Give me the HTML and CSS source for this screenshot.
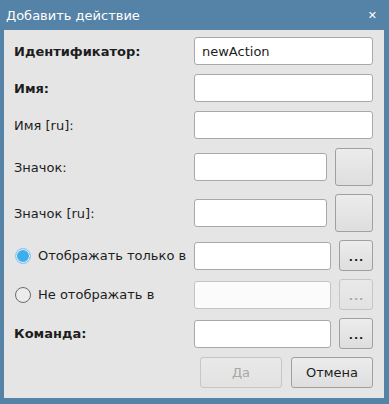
FILE: index.html
```html
<!DOCTYPE html>
<html lang="ru">
<head>
    <meta charset="UTF-8">
    <title>Добавить действие</title>
    <link rel="stylesheet" href="styles.css">
</head>
<body>
<div class="window">
    <div class="titlebar">
        <span class="title">Добавить действие</span>
        <span class="close">&#x2715;</span>
    </div>
    <div class="content">
        <div class="row">
            <label class="lbl bold">Идентификатор:</label>
            <input class="field" type="text" value="newAction">
        </div>
        <div class="row">
            <label class="lbl bold">Имя:</label>
            <input class="field" type="text">
        </div>
        <div class="row">
            <label class="lbl">Имя [ru]:</label>
            <input class="field" type="text">
        </div>
        <div class="row tall">
            <label class="lbl">Значок:</label>
            <input class="field icon-field" type="text">
            <button class="btn icon-btn"></button>
        </div>
        <div class="row tall">
            <label class="lbl">Значок [ru]:</label>
            <input class="field icon-field" type="text">
            <button class="btn icon-btn"></button>
        </div>
        <div class="row mid">
            <label class="lbl radio-lbl"><span class="radio checked"></span>Отображать только в</label>
            <input class="field dots-field" type="text">
            <button class="btn dots">...</button>
        </div>
        <div class="row mid">
            <label class="lbl radio-lbl"><span class="radio"></span>Не отображать в</label>
            <input class="field dots-field" type="text" disabled>
            <button class="btn dots" disabled>...</button>
        </div>
        <div class="row mid">
            <label class="lbl bold">Команда:</label>
            <input class="field dots-field" type="text">
            <button class="btn dots">...</button>
        </div>
        <div class="row mid actions">
            <button class="btn action" disabled>Да</button>
            <button class="btn action">Отмена</button>
        </div>
    </div>
</div>
</body>
</html>
```

FILE: styles.css
```css
html, body {
    margin: 0;
    padding: 0;
}

body {
    width: 389px;
    height: 404px;
    background: #5582a7;
    font-family: "DejaVu Sans", sans-serif;
    font-size: 13px;
    color: #1d1d1d;
}

.window {
    display: flex;
    flex-direction: column;
    height: 404px;
}

.titlebar {
    height: 30px;
    display: flex;
    align-items: center;
    justify-content: space-between;
    padding: 0 12px 0 6px;
    color: #ffffff;
}

.title {
    font-size: 13px;
    margin-top: 1px;
}

.close {
    font-size: 11px;
    font-weight: bold;
}

.content {
    margin: 0 5px 6px 4px;
    flex: 1;
    background: #e5e5e5;
    padding: 7px 11px 0 10px;
}

.row {
    display: flex;
    align-items: center;
    height: 28px;
    margin-bottom: 9px;
}

.row.tall {
    height: 38px;
    margin-bottom: 8px;
}

.row.mid {
    height: 31px;
    margin-bottom: 8px;
}

.lbl {
    width: 180px;
    flex: none;
}

.bold {
    font-weight: bold;
}

.radio-lbl {
    display: flex;
    align-items: center;
}

.radio {
    width: 14px;
    height: 14px;
    border-radius: 50%;
    border: 1px solid #6b6b6b;
    background: #ececec;
    margin: 0 7px 0 1px;
    box-sizing: content-box;
}

.radio.checked {
    border-color: #8ecbef;
    background: #3daee9;
    box-shadow: inset 0 0 0 1px #e8f4fb;
}

.field {
    box-sizing: border-box;
    height: 28px;
    width: 179px;
    border: 1px solid #a9a9a9;
    border-radius: 3px;
    background: #ffffff;
    padding: 0 7px;
    font-family: "DejaVu Sans", sans-serif;
    font-size: 13px;
    color: #1d1d1d;
    margin: 0;
}

.field:disabled {
    background: #fbfbfb;
    border-color: #c4c4c4;
}

.icon-field {
    width: 133px;
}

.dots-field {
    width: 137px;
}

.btn {
    box-sizing: border-box;
    border: 1px solid #a0a0a0;
    border-radius: 3px;
    background: linear-gradient(#ececec, #dedede);
    font-family: "DejaVu Sans", sans-serif;
    font-size: 13px;
    color: #1d1d1d;
    padding: 0;
    margin: 0 0 0 8px;
}

.btn:disabled {
    color: #a8a8a8;
    border-color: #c6c6c6;
    background: linear-gradient(#e9e9e9, #e2e2e2);
}

.icon-btn {
    width: 38px;
    height: 38px;
}

.dots {
    width: 34px;
    height: 31px;
    font-size: 11px;
    font-weight: bold;
    letter-spacing: 1px;
    padding: 3px 0 0 1px;
}

.actions {
    justify-content: flex-end;
}

.action {
    width: 82px;
    height: 31px;
    margin-left: 9px;
}
```
